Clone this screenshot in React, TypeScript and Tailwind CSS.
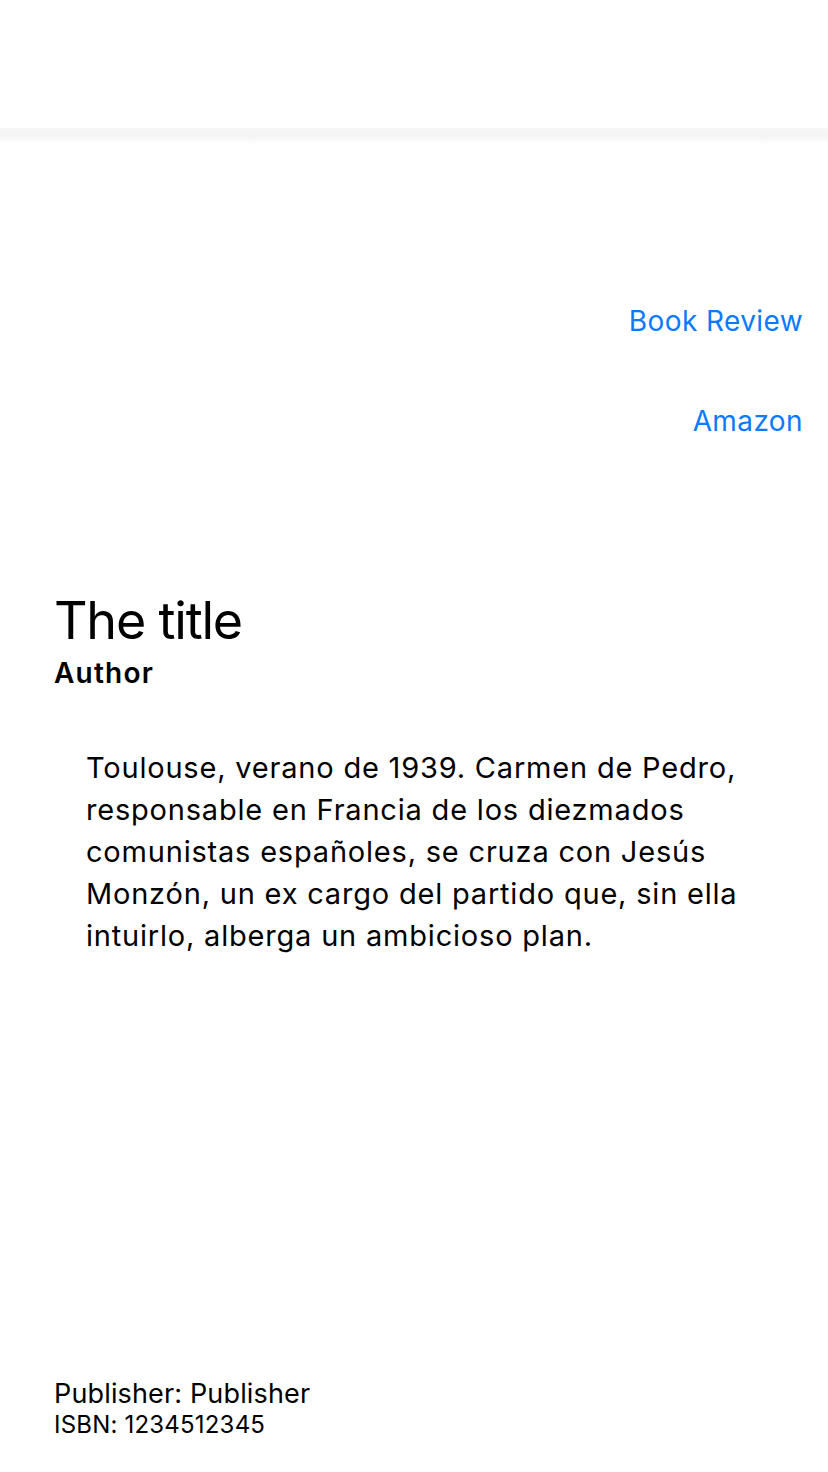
import React from "react";

const App = () => {
  return (
    <div
      className="flex min-h-[1472px] w-full flex-col bg-white text-black"
      style={{ fontFamily: "Inter, 'Noto Sans', sans-serif" }}
    >
      {/* NAV BAR */}
      <div className="h-[128px] bg-white" />
      <div className="h-[16px] bg-gradient-to-b from-[#f7f7f7] via-[#f4f4f4] to-white" />

      {/* LINKS */}
      <div className="mt-[159px] flex flex-col items-end gap-[64px] pr-[25px]">
        <a className="text-[28px] leading-[36px] tracking-[0.4px] text-[#0a7aff]">Book Review</a>
        <a className="text-[28px] leading-[36px] tracking-[0.4px] text-[#0a7aff]">Amazon</a>
      </div>

      {/* TITLE */}
      <div className="mt-[153px] flex flex-col px-[54px]">
        <h1 className="text-[52px] leading-[58px] font-normal tracking-[-1.2px]">The title</h1>
        <p className="mt-[6px] text-[28px] leading-[34px] font-semibold tracking-[1.2px]">Author</p>
      </div>

      <p className="mt-[57px] pl-[86px] pr-[54px] text-[29px] leading-[42px] tracking-[0.8px]">
        Toulouse, verano de 1939. Carmen de Pedro, responsable en Francia de los
        diezmados comunistas españoles, se cruza con Jesús Monzón, un ex cargo
        del partido que, sin ella intuirlo, alberga un ambicioso plan.
      </p>

      <div className="mt-auto flex flex-col px-[54px] pb-[32px]">
        <p className="text-[27px] leading-[32px] tracking-[0.15px]">Publisher: Publisher</p>
        <p className="text-[24px] leading-[30px] tracking-[0.2px]">ISBN: 1234512345</p>
      </div>
    </div>
  );
};

export default App;
